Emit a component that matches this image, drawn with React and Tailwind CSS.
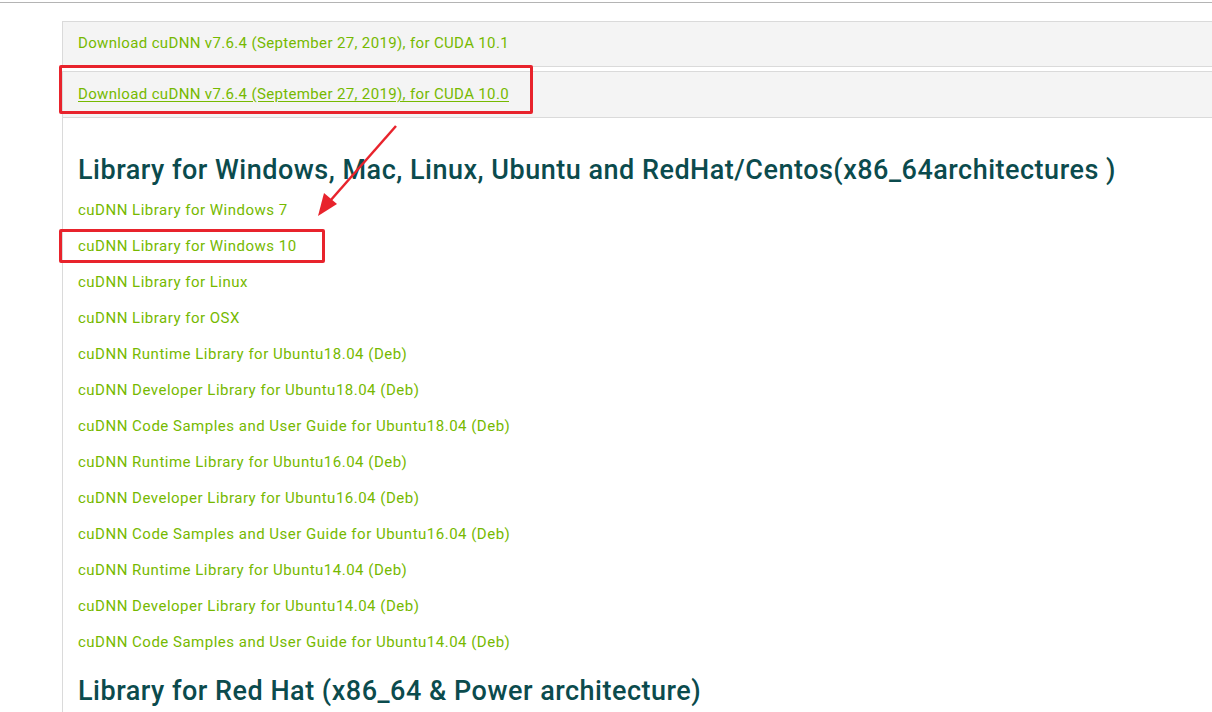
import React from "react";

const links = [
  "cuDNN Library for Windows 7",
  "cuDNN Library for Windows 10",
  "cuDNN Library for Linux",
  "cuDNN Library for OSX",
  "cuDNN Runtime Library for Ubuntu18.04 (Deb)",
  "cuDNN Developer Library for Ubuntu18.04 (Deb)",
  "cuDNN Code Samples and User Guide for Ubuntu18.04 (Deb)",
  "cuDNN Runtime Library for Ubuntu16.04 (Deb)",
  "cuDNN Developer Library for Ubuntu16.04 (Deb)",
  "cuDNN Code Samples and User Guide for Ubuntu16.04 (Deb)",
  "cuDNN Runtime Library for Ubuntu14.04 (Deb)",
  "cuDNN Developer Library for Ubuntu14.04 (Deb)",
  "cuDNN Code Samples and User Guide for Ubuntu14.04 (Deb)",
];

export default function App() {
  return (
    <div
      className="relative w-[1212px] h-[712px] overflow-hidden bg-white"
      style={{ fontFamily: "Roboto, 'Liberation Sans', sans-serif" }}
    >
      <div className="h-[3px] border-b border-[#b4b4b4]" />
      <div className="pl-[62px] pt-[18px]">
        <div className="flex flex-col gap-[4px] -mr-[4px]">
          <div className="h-[46px] border border-[#dadada] bg-[#f4f4f4] pl-[15px] pb-[1px] flex items-center text-[15px] tracking-[0.35px] text-[#76b900]">
            Download cuDNN v7.6.4 (September 27, 2019), for CUDA 10.1
          </div>
          <div className="h-[47px] border border-[#dadada] bg-[#f4f4f4] pl-[15px] pb-[1px] flex items-center text-[15px] tracking-[0.35px] text-[#76b900] underline underline-offset-2">
            Download cuDNN v7.6.4 (September 27, 2019), for CUDA 10.0
          </div>
        </div>
        <div className="border-l border-[#dadada] pl-[15px] pt-[33px] h-[700px]">
          <h2 className="text-[27px] leading-[38px] tracking-[0.5px] font-medium text-[#0b4b4d]">
            Library for Windows, Mac, Linux, Ubuntu and RedHat/Centos(x86_64architectures )
          </h2>
          <div className="flex flex-col pt-[3px]">
            {links.map((l) => (
              <div key={l} className="h-[36px] leading-[36px] text-[15px] tracking-[0.5px] text-[#76b900]">
                {l}
              </div>
            ))}
          </div>
          <h2 className="pt-[12px] text-[27px] leading-[38px] tracking-[0.5px] font-medium text-[#0b4b4d]">
            Library for Red Hat (x86_64 &amp; Power architecture)
          </h2>
        </div>
      </div>

      <div className="absolute left-[59px] top-[65px] w-[474px] h-[49px] border-[3px] border-[#e8232c] rounded-[2px]" />
      <div className="absolute left-[59px] top-[229px] w-[266px] h-[34px] border-[3px] border-[#e8232c] rounded-[2px]" />
      <svg className="absolute left-0 top-0" width="1212" height="712">
        <line x1="396" y1="126" x2="330" y2="201" stroke="#e8232c" strokeWidth="2.5" />
        <polygon points="318,216 324,193 337,204" fill="#e8232c" />
      </svg>
    </div>
  );
}
